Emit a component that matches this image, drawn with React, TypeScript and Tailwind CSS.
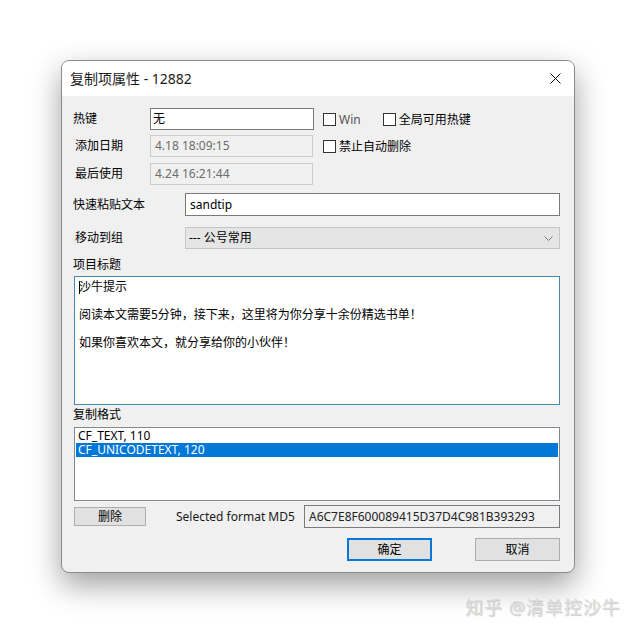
import React from "react";

const font = "font-['Noto_Sans','Noto_Sans_CJK_SC',sans-serif]";

function Check({ label, gray }: { label: string; gray?: boolean }) {
  return (
    <label className="flex items-center gap-[3px]">
      <span className="w-[13px] h-[13px] border border-[#333] bg-white" />
      <span className={gray ? "text-[#555]" : "text-black"}>{label}</span>
    </label>
  );
}

export default function App() {
  return (
    <div className={`w-[635px] h-[635px] bg-white relative overflow-hidden ${font} text-[12px] leading-[14px] text-black`}>
      <div className="pt-[60px] pl-[61px]">
        {/* Dialog window */}
        <div className="w-[514px] h-[513px] rounded-[8px] border border-[#8a8a8a] bg-[#f0f0f0] shadow-[0_12px_30px_rgba(0,0,0,0.38)] flex flex-col overflow-hidden">
          <div className="h-[35px] bg-white flex items-center justify-between pl-[8px] pr-[12px] shrink-0">
            <span className="text-[14px] text-[#1a1a1a]">复制项属性 - 12882</span>
            <svg width="11" height="11" viewBox="0 0 11 11" className="mr-[1px]">
              <path d="M0.5 0.5 L10.5 10.5 M10.5 0.5 L0.5 10.5" stroke="#111" strokeWidth="1" />
            </svg>
          </div>

          <div className="flex flex-col pl-[10px] pr-[14px] pt-[12px]">
            {/* Hotkey */}
            <div className="flex items-center h-[22px]">
              <span className="w-[78px] pl-[1px]">热键</span>
              <div className="w-[164px] h-[22px] border border-[#7a7a7a] bg-white flex items-center px-[2px]">无</div>
              <div className="ml-[9px] mt-[1px]">
                <Check label="Win" gray />
              </div>
              <div className="ml-[22px] mt-[1px]">
                <Check label="全局可用热键" />
              </div>
            </div>

            {/* Added date */}
            <div className="flex items-center h-[22px] mt-[5px]">
              <span className="w-[78px] pl-[3px]">添加日期</span>
              <div className="w-[163px] h-[22px] border border-[#cccccc] bg-[#f0f0f0] flex items-center px-[4px] text-[#6d6d6d]">4.18 18:09:15</div>
              <div className="ml-[10px] mt-[1px]">
                <Check label="禁止自动删除" />
              </div>
            </div>

            {/* Last used */}
            <div className="flex items-center h-[22px] mt-[6px]">
              <span className="w-[78px] pl-[3px]">最后使用</span>
              <div className="w-[163px] h-[22px] border border-[#cccccc] bg-[#f0f0f0] flex items-center px-[4px] text-[#6d6d6d]">4.24 16:21:44</div>
            </div>

            {/* Quick paste */}
            <div className="flex items-center h-[23px] mt-[8px]">
              <span className="w-[113px] pl-[1px]">快速粘贴文本</span>
              <div className="flex-1 h-[23px] border border-[#7a7a7a] bg-white flex items-center px-[4px]">sandtip</div>
            </div>

            {/* Group */}
            <div className="flex items-center h-[22px] mt-[11px]">
              <span className="w-[113px] pl-[3px]">移动到组</span>
              <div className="flex-1 h-[22px] border border-[#c5c5c5] bg-[#e5e5e5] flex items-center justify-between pl-[3px] pr-[6px]">
                <span>--- 公号常用</span>
                <svg width="9" height="5" viewBox="0 0 9 5">
                  <path d="M0.5 0.5 L4.5 4.5 L8.5 0.5" stroke="#777" strokeWidth="1" fill="none" />
                </svg>
              </div>
            </div>

            {/* Title */}
            <div className="mt-[9px] pl-[1px]">项目标题</div>
            <div className="ml-[2px] mt-[4px] h-[129px] border border-[#4a88b3] bg-white px-[4px] pt-[3px] flex flex-col">
              <div className="flex items-center">
                <span className="w-px h-[13px] bg-black -mr-px" />
                <span>沙牛提示</span>
              </div>
              <div className="mt-[14px]">阅读本文需要5分钟，接下来，这里将为你分享十余份精选书单！</div>
              <div className="mt-[14px]">如果你喜欢本文，就分享给你的小伙伴！</div>
            </div>

            {/* Formats */}
            <div className="mt-[3px] pl-[1px]">复制格式</div>
            <div className="ml-[2px] mt-[5px] h-[74px] border border-[#828790] bg-white p-[1px] flex flex-col">
              <div className="h-[14px] pl-[2px] flex items-center">CF_TEXT, 110</div>
              <div className="h-[14px] pl-[2px] flex items-center bg-[#0078d7] text-white">CF_UNICODETEXT, 120</div>
            </div>

            {/* MD5 row */}
            <div className="ml-[2px] mt-[4px] h-[23px] flex items-center">
              <button className="w-[72px] h-[19px] border border-[#adadad] bg-[#e1e1e1] flex items-center justify-center">删除</button>
              <span className="ml-[30px] text-[#1a1a1a]">Selected format MD5</span>
              <div className="ml-auto w-[256px] h-[23px] border border-[#7a7a7a] bg-[#f0f0f0] flex items-center px-[4px] text-[#222]">A6C7E8F600089415D37D4C981B393293</div>
            </div>

            {/* Buttons */}
            <div className="mt-[10px] flex justify-end gap-[43px]">
              <button className="w-[85px] h-[23px] border-2 border-[#0078d7] bg-[#e1e1e1] flex items-center justify-center">确定</button>
              <button className="w-[85px] h-[23px] border border-[#adadad] bg-[#e1e1e1] flex items-center justify-center">取消</button>
            </div>
          </div>
        </div>
      </div>

      <div className="absolute left-[465px] top-[596px] text-[18px] leading-[22px] text-[#dcdcdc] [text-shadow:1px_1px_1px_rgba(0,0,0,0.2)] tracking-[1px]">
        知乎 @清单控沙牛
      </div>
    </div>
  );
}
